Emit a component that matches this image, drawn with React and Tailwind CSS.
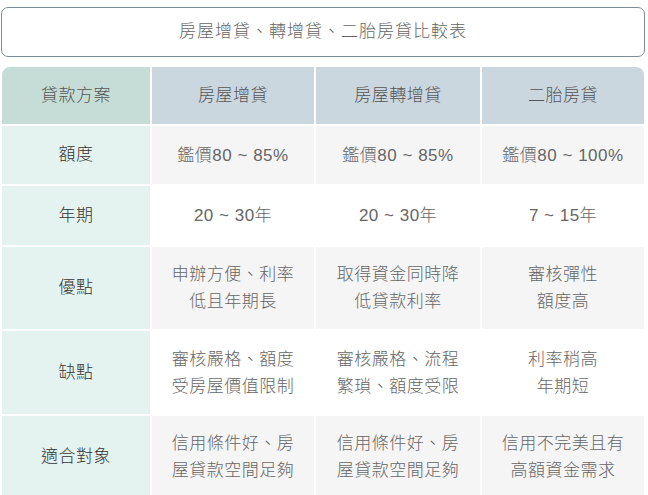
import React from "react";

const font = {
  fontFamily: '"Liberation Sans", "Noto Sans CJK TC", sans-serif',
};

const headers = ["貸款方案", "房屋增貸", "房屋轉增貸", "二胎房貸"];

const rows = [
  { label: "額度", h: "h-[58px]", cells: [["鑑價80 ~ 85%"], ["鑑價80 ~ 85%"], ["鑑價80 ~ 100%"]] },
  { label: "年期", h: "h-[59px]", cells: [["20 ~ 30年"], ["20 ~ 30年"], ["7 ~ 15年"]] },
  { label: "優點", h: "h-[82px]", cells: [["申辦方便、利率", "低且年期長"], ["取得資金同時降", "低貸款利率"], ["審核彈性", "額度高"]] },
  { label: "缺點", h: "h-[83px]", cells: [["審核嚴格、額度", "受房屋價值限制"], ["審核嚴格、流程", "繁瑣、額度受限"], ["利率稍高", "年期短"]] },
  { label: "適合對象", h: "h-[82px]", cells: [["信用條件好、房", "屋貸款空間足夠"], ["信用條件好、房", "屋貸款空間足夠"], ["信用不完美且有", "高額資金需求"]] },
];

export default function App() {
  return (
    <div className="w-[648px] h-[495px] bg-white overflow-hidden font-light" style={font}>
      <div className="pt-[7px] pl-[1px]">
        <div className="w-[644px] h-[50px] border border-[#7d8d96] rounded-[7px] flex items-center justify-center text-[17px] tracking-[1px] text-[#666]">
          房屋增貸、轉增貸、二胎房貸比較表
        </div>
      </div>
      <div className="pl-[2px] pt-[10px]">
        <div className="w-[642px] grid grid-cols-[148px_162px_164px_162px] gap-[2px] rounded-t-[8px] overflow-hidden bg-white">
          {headers.map((h, i) => (
            <div
              key={h}
              className={`h-[57px] flex items-center justify-center text-[17px] tracking-[0.5px] text-[#555] ${
                i === 0 ? "bg-[#c5ddd6]" : "bg-[#cbd7df]"
              }`}
            >
              {h}
            </div>
          ))}
          {rows.map((r, ri) => (
            <React.Fragment key={r.label}>
              <div
                className={`${r.h} bg-[#e5f3f0] flex items-center justify-center text-[17px] tracking-[0.5px] text-[#333]`}
              >
                {r.label}
              </div>
              {r.cells.map((c, ci) => (
                <div
                  key={ci}
                  className={`${r.h} ${
                    ri % 2 === 0 ? "bg-[#f5f5f5]" : "bg-white"
                  } flex flex-col items-center justify-center text-[17px] leading-[27px] tracking-[0.5px] text-[#666]`}
                >
                  {c.map((line, li) => (
                    <div key={li}>{line}</div>
                  ))}
                </div>
              ))}
            </React.Fragment>
          ))}
        </div>
      </div>
    </div>
  );
}
